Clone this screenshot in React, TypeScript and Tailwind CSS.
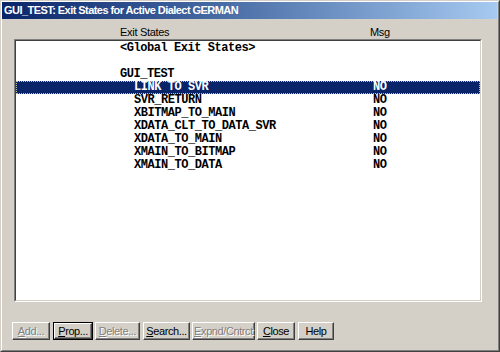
import React from "react"

const rows = [
  { name: "<Global Exit States>", msg: "", indent: 0 },
  { name: "", msg: "", indent: 0 },
  { name: "GUI_TEST", msg: "", indent: 0 },
  { name: "LINK TO SVR", msg: "NO", indent: 1, selected: true },
  { name: "SVR_RETURN", msg: "NO", indent: 1 },
  { name: "XBITMAP_TO_MAIN", msg: "NO", indent: 1 },
  { name: "XDATA_CLT_TO_DATA_SVR", msg: "NO", indent: 1 },
  { name: "XDATA_TO_MAIN", msg: "NO", indent: 1 },
  { name: "XMAIN_TO_BITMAP", msg: "NO", indent: 1 },
  { name: "XMAIN_TO_DATA", msg: "NO", indent: 1 },
]

const buttons = [
  { label: "Add...", key: "A", rest: "dd...", width: "w-[38px]", ml: "ml-[10px]", disabled: true },
  { label: "Prop...", key: "P", rest: "rop...", width: "w-[40px]", ml: "ml-[3px]", isDefault: true },
  { label: "Delete...", key: "D", rest: "elete...", width: "w-[45px]", ml: "ml-[2px]", disabled: true },
  { label: "Search...", key: "S", rest: "earch...", width: "w-[47px]", ml: "ml-[3px]" },
  { label: "Expnd/Cntrct", key: "E", rest: "xpnd/Cntrct", width: "w-[63px]", ml: "ml-[2px]", disabled: true },
  { label: "Close", key: "C", rest: "lose", width: "w-[38px]", ml: "ml-[2px]" },
  { label: "Help", key: "", rest: "Help", width: "w-[36px]", ml: "ml-[3px]" },
]

function WinButton({ b }: { b: (typeof buttons)[number] }) {
  return (
    <div
      className={`${b.ml} ${b.width} h-[18px] shrink-0 ${
        b.isDefault ? "border border-black" : ""
      }`}
    >
      <div
        className={`w-full h-full flex items-center justify-center border border-t-white border-l-white border-r-[#404040] border-b-[#404040] shadow-[inset_-1px_-1px_0_#808080] text-[11px] tracking-[-0.4px] whitespace-nowrap ${
          b.disabled ? "text-[#808080] [text-shadow:1px_1px_0_#fff]" : "text-black"
        }`}
      >
        {b.key && <span className="underline underline-offset-1">{b.key}</span>}
        <span>{b.rest}</span>
      </div>
    </div>
  )
}

export default function App() {
  return (
    <div
      className="w-[500px] h-[352px] bg-[#d4d0c8] border border-t-[#d4d0c8] border-l-[#d4d0c8] border-r-[#404040] border-b-[#404040] overflow-hidden"
      style={{ fontFamily: '"Liberation Sans", Arial, sans-serif' }}
    >
      <div className="h-full border border-t-white border-l-white border-r-[#808080] border-b-[#808080] flex flex-col">
        {/* title bar */}
        <div className="h-[17px] mr-px flex items-center pl-[2px] bg-gradient-to-r from-[#0a246a] to-[#a6caf0]">
          <span className="text-white font-bold text-[11px] tracking-[-0.55px] leading-none">
            GUI_TEST: Exit States for Active Dialect GERMAN
          </span>
        </div>

        {/* column headers */}
        <div className="mt-[7px] h-[13px] flex items-center text-[11px] tracking-[-0.3px] text-black leading-none">
          <span className="ml-[118px] w-[250px]">Exit States</span>
          <span>Msg</span>
        </div>

        {/* list box */}
        <div className="ml-[12px] w-[468px] h-[263px] border border-t-[#808080] border-l-[#808080] border-r-white border-b-white">
          <div className="w-full h-full bg-white border border-t-[#404040] border-l-[#404040] border-r-[#d4d0c8] border-b-[#d4d0c8]">
            <div
              className="pt-px font-bold text-[12px] tracking-[-0.45px] leading-[13px]"
              style={{ fontFamily: '"Liberation Mono", "Courier New", monospace' }}
            >
              {rows.map((r, i) => (
                <div
                  key={i}
                  className={`h-[13px] flex items-center ${
                    r.selected
                      ? "bg-[#0a246a] text-white border border-dotted border-[#c8c090]"
                      : "text-black"
                  }`}
                >
                  <div
                    className={`w-[357px] shrink-0 whitespace-pre ${
                      r.indent ? "pl-[118px]" : "pl-[104px]"
                    } ${r.selected ? "-ml-px" : ""}`}
                  >
                    {r.name}
                  </div>
                  <div>{r.msg}</div>
                </div>
              ))}
            </div>
          </div>
        </div>

        {/* buttons */}
        <div className="mt-[20px] flex">
          {buttons.map((b) => (
            <WinButton key={b.label} b={b} />
          ))}
        </div>
      </div>
    </div>
  )
}
